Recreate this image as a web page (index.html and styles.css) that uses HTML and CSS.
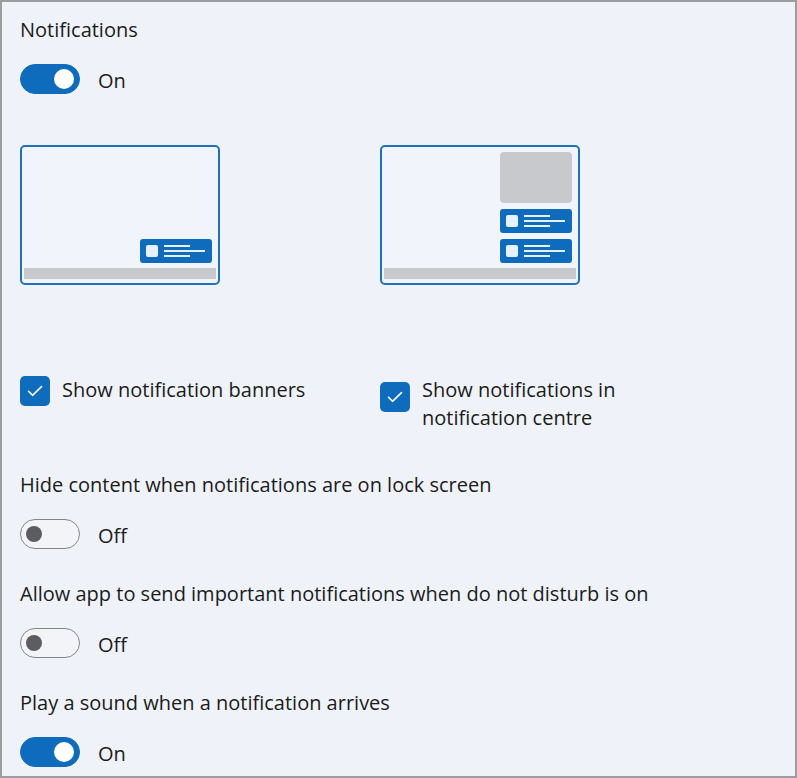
FILE: index.html
```html
<!DOCTYPE html>
<html lang="en">
<head>
    <meta charset="UTF-8">
    <meta name="viewport" content="width=device-width, initial-scale=1.0">
    <title>Notifications</title>
    <link rel="stylesheet" href="styles.css">
</head>
<body>
<div class="window">

    <div class="label">Notifications</div>
    <div class="toggle-row">
        <span class="toggle on"><span class="knob"></span></span>
        <span class="state">On</span>
    </div>

    <!-- Preview pictures -->
    <div class="previews">
        <div class="preview">
            <div class="screen">
                <div class="stack">
                    <div class="banner"><span class="icon"></span><span class="lines"><i class="short"></i><i></i><i class="short"></i></span></div>
                </div>
            </div>
            <div class="taskbar"></div>
        </div>
        <div class="preview">
            <div class="screen">
                <div class="stack">
                    <div class="centre"></div>
                    <div class="banner"><span class="icon"></span><span class="lines"><i class="short"></i><i></i><i class="short"></i></span></div>
                    <div class="banner"><span class="icon"></span><span class="lines"><i class="short"></i><i></i><i class="short"></i></span></div>
                </div>
            </div>
            <div class="taskbar"></div>
        </div>
    </div>

    <div class="checks">
        <label class="check">
            <span class="box"><svg viewBox="0 0 20 20" width="20" height="20"><path d="M3.5 10.3l4 4L16.5 5.6" fill="none" stroke="#fff" stroke-width="1.6" stroke-linecap="round" stroke-linejoin="round"/></svg></span>
            <span class="check-text">Show notification banners</span>
        </label>
        <label class="check second">
            <span class="box"><svg viewBox="0 0 20 20" width="20" height="20"><path d="M3.5 10.3l4 4L16.5 5.6" fill="none" stroke="#fff" stroke-width="1.6" stroke-linecap="round" stroke-linejoin="round"/></svg></span>
            <span class="check-text">Show notifications in<br>notification centre</span>
        </label>
    </div>

    <div class="label section">Hide content when notifications are on lock screen</div>
    <div class="toggle-row">
        <span class="toggle"><span class="knob"></span></span>
        <span class="state">Off</span>
    </div>

    <div class="label section-small">Allow app to send important notifications when do not disturb is on</div>
    <div class="toggle-row">
        <span class="toggle"><span class="knob"></span></span>
        <span class="state">Off</span>
    </div>

    <div class="label section-small">Play a sound when a notification arrives</div>
    <div class="toggle-row">
        <span class="toggle on"><span class="knob"></span></span>
        <span class="state">On</span>
    </div>

</div>
</body>
</html>
```

FILE: styles.css
```css
body {
    margin: 0;
    font-family: "Open Sans", "Noto Sans", sans-serif;
    color: #1b1b1b;
}

.window {
    height: 778px;
    box-sizing: border-box;
    border: 2px solid #9d9d9f;
    background: #eff3f9;
    padding: 14px 18px 0;
    overflow: hidden;
}

.label {
    font-size: 20px;
    line-height: 28px;
    height: 28px;
    white-space: nowrap;
}

.section {
    margin-top: 39px;
}

.section-small {
    margin-top: 31px;
}

.toggle-row {
    display: flex;
    align-items: center;
    gap: 18px;
    margin-top: 20px;
    height: 30px;
}

.toggle {
    width: 60px;
    height: 30px;
    box-sizing: border-box;
    border-radius: 15px;
    border: 1.5px solid #858589;
    background: #f3f4f7;
    display: flex;
    align-items: center;
    padding-left: 5px;
}

.toggle .knob {
    width: 16px;
    height: 16px;
    border-radius: 50%;
    background: #5d5d60;
}

.toggle.on {
    background: #0f6cbd;
    border-color: #0f6cbd;
    justify-content: flex-end;
    padding-right: 5px;
}

.toggle.on .knob {
    width: 20px;
    height: 20px;
    background: #ffffff;
}

.state {
    font-size: 20px;
    padding-top: 2px;
}

.previews {
    display: flex;
    gap: 160px;
    margin-top: 51px;
}

.preview {
    width: 200px;
    height: 140px;
    box-sizing: border-box;
    border: 2px solid #1f72b8;
    border-radius: 5px;
    background: #f1f5fb;
    padding: 5px 2px 2px;
    display: flex;
    flex-direction: column;
}

.screen {
    flex: 1;
    display: flex;
    justify-content: flex-end;
    align-items: flex-end;
    padding: 0 4px 5px 0;
}

.stack {
    display: flex;
    flex-direction: column;
    gap: 6px;
    width: 72px;
}

.centre {
    height: 51px;
    border-radius: 4px;
    background: #c8c9cc;
}

.banner {
    height: 24px;
    border-radius: 3px;
    background: #0f6cbd;
    display: flex;
    align-items: center;
    padding-left: 6px;
    gap: 6px;
}

.icon {
    width: 12px;
    height: 12px;
    border-radius: 2px;
    background: #e4f1ff;
}

.lines {
    display: flex;
    flex-direction: column;
    gap: 3px;
}

.lines i {
    display: block;
    width: 41px;
    height: 2px;
    background: #e4f1ff;
}

.lines i.short {
    width: 26px;
}

.taskbar {
    height: 11px;
    margin-bottom: 2px;
    background: #c8c9cc;
}

.checks {
    display: flex;
    margin-top: 90px;
}

.check {
    display: flex;
    align-items: flex-start;
    gap: 12px;
    width: 360px;
}

.box {
    width: 30px;
    height: 30px;
    flex: none;
    border-radius: 5px;
    background: #0f6cbd;
    display: flex;
    align-items: center;
    justify-content: center;
}

.check:first-child .box {
    margin-top: 1px;
}

.check.second .box {
    margin-top: 7px;
}

.check-text {
    font-size: 20px;
    line-height: 28px;
    padding-top: 1px;
}
```
